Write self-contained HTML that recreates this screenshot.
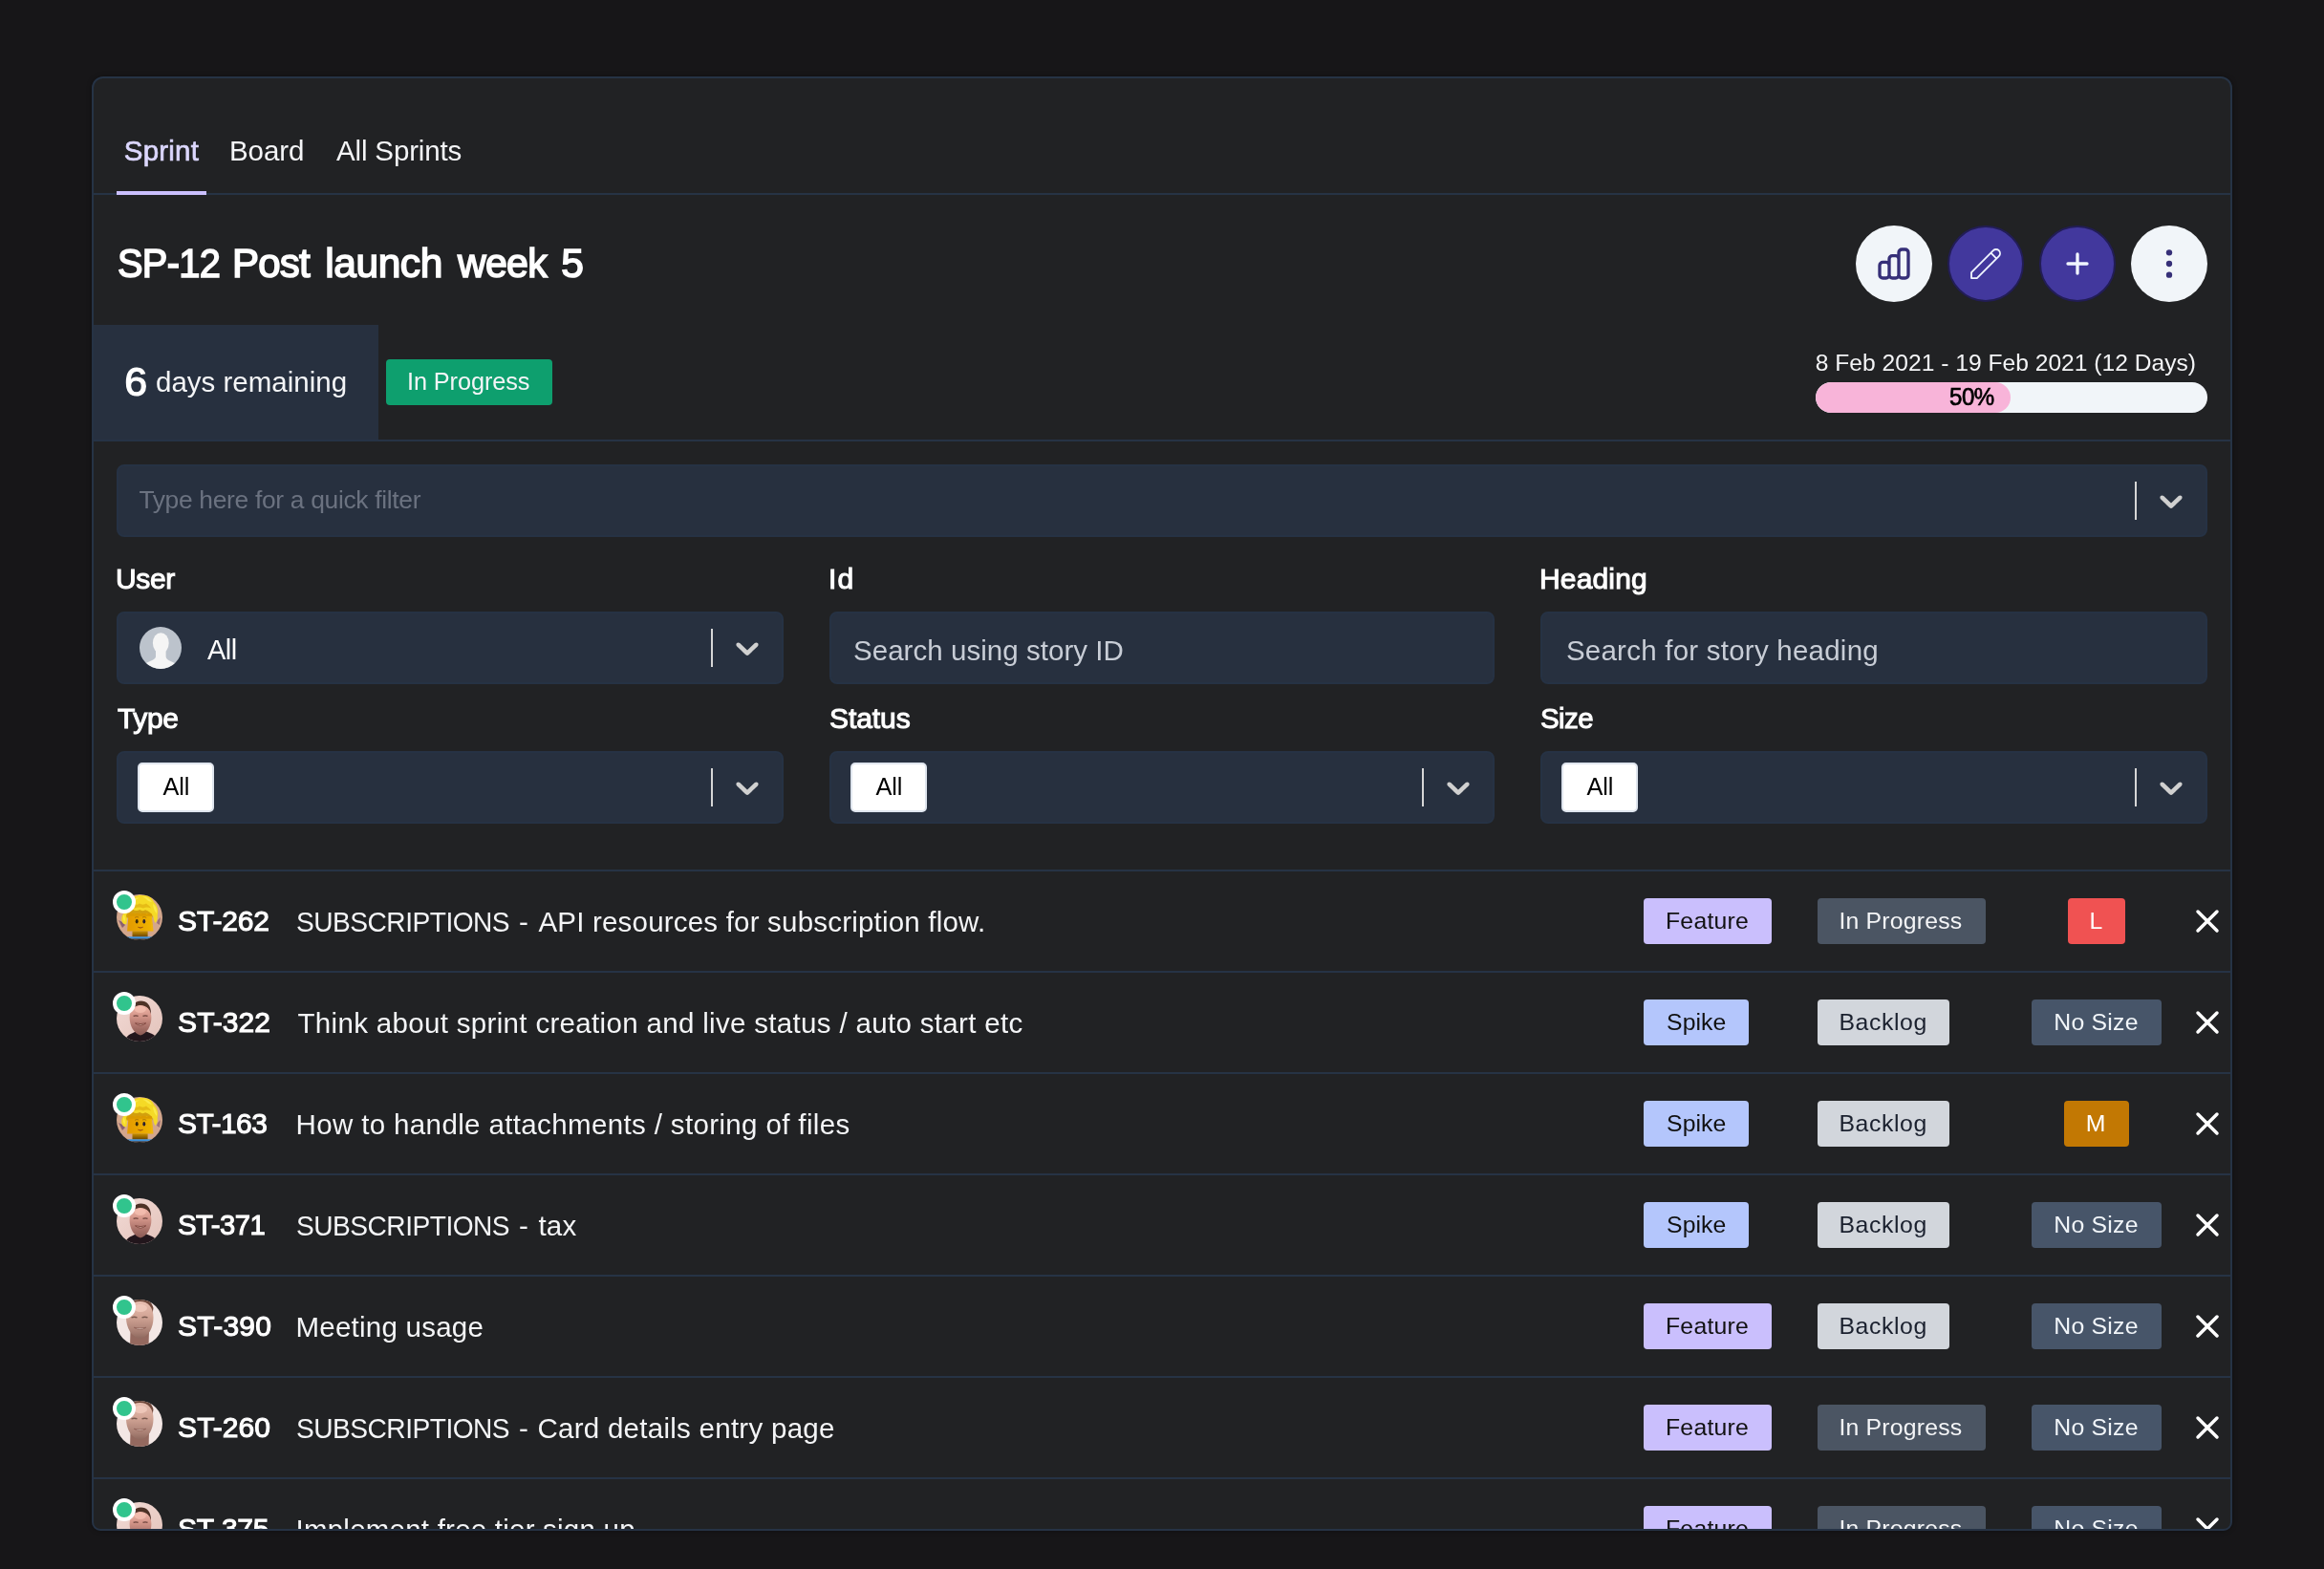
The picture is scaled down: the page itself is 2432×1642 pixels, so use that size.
<!DOCTYPE html>
<html lang="en"><head><meta charset="utf-8"><title>SP-12 Post launch week 5</title>
<style>
*{box-sizing:border-box;margin:0;padding:0}
h1{font:inherit}
html,body{width:2432px;height:1642px;overflow:hidden;background:#171618;font-family:"Liberation Sans",sans-serif;color:#fff}
.panel{position:absolute;left:96px;top:80px;width:2240px;height:1522px;border:2px solid #263345;border-radius:12px 12px 9px 9px;background:#212224;overflow:hidden;box-shadow:0 0 5px rgba(0,0,0,.35)}
.o{position:absolute;left:-98px;top:-82px;width:2432px;height:1642px;will-change:transform}
.o *{position:absolute}
.t{white-space:nowrap;line-height:1}
.hr{left:98px;width:2236px;height:2px;background:#263345}
.inp{background:#27303f;border:2px solid #263244;border-radius:8px;height:76px}
.sep{width:2px;height:40px;background:#d6d6d6}
.chip{width:80px;height:52px;background:#fff;border:2px solid #dfe5ee;border-radius:5px}
.bdg{height:48px;border-radius:4px}
.btn{width:80px;height:80px;border-radius:50%}
.btn svg{left:20px;top:20px;width:40px;height:40px}
.btn.p svg{left:18px;top:18px}
.av{width:48px;height:48px;border-radius:50%;overflow:hidden}
.dot{width:24px;height:24px;border-radius:50%;background:#31c48d;border:4px solid #fff}
svg{overflow:visible}
</style></head>
<body>
<div class="panel"><div class="o">
<nav class="tabs">
<span class="t" style="left:129.85px;top:143.00px;font-size:29.5px;-webkit-text-stroke:0.7px #dcd7fe;letter-spacing:0.187px;color:#dcd7fe;">Sprint</span>
<span class="t" style="left:240.00px;top:143.00px;font-size:29.5px;letter-spacing:-0.078px;color:#f4f5f7;">Board</span>
<span class="t" style="left:352.00px;top:143.00px;font-size:29.5px;letter-spacing:-0.154px;color:#f4f5f7;">All Sprints</span>
<div class="hr" style="top:202px"></div>
<div style="left:122px;top:200px;width:94px;height:4px;background:#cabffd"></div>
</nav>
<header>
<h1>
<span class="t" style="left:122.81px;top:255.40px;font-size:42.5px;-webkit-text-stroke:1.6px #fff;letter-spacing:-0.765px;transform:scaleX(0.9366);transform-origin:0 0;color:#fff;">SP-12</span>
<span class="t" style="left:243.43px;top:255.40px;font-size:42.5px;-webkit-text-stroke:1.6px #fff;letter-spacing:-0.765px;transform:scaleX(0.9873);transform-origin:0 0;color:#fff;">Post</span>
<span class="t" style="left:340.20px;top:255.40px;font-size:42.5px;-webkit-text-stroke:1.6px #fff;letter-spacing:-0.420px;color:#fff;">launch</span>
<span class="t" style="left:479.24px;top:255.40px;font-size:42.5px;-webkit-text-stroke:1.6px #fff;letter-spacing:-0.765px;transform:scaleX(0.9674);transform-origin:0 0;color:#fff;">week</span>
<span class="t" style="left:587.30px;top:255.40px;font-size:42.5px;-webkit-text-stroke:1.6px #fff;letter-spacing:-0.600px;color:#fff;">5</span>
</h1>
<div class="btn" style="left:1942px;top:236px;background:#f1f5f9"><svg viewBox="0 0 24 24" fill="none" stroke="#362f78" stroke-width="2" stroke-linecap="round" stroke-linejoin="round"><path d="M9 19v-6a2 2 0 00-2-2H5a2 2 0 00-2 2v6a2 2 0 002 2h2a2 2 0 002-2zm0 0V9a2 2 0 012-2h2a2 2 0 012 2v10m-6 0a2 2 0 002 2h2a2 2 0 002-2m0 0V5a2 2 0 012-2h2a2 2 0 012 2v14a2 2 0 01-2 2h-2a2 2 0 01-2-2z"/></svg></div>
<div class="btn p" style="left:2038px;top:236px;background:#42389d;border:2px solid #221d56"><svg viewBox="0 0 24 24" fill="none" stroke="#f0f5ff" stroke-width="1.1" stroke-linecap="round" stroke-linejoin="round"><path d="M15.232 5.232l3.536 3.536m-2.036-5.036a2.5 2.5 0 113.536 3.536L6.5 21.036H3v-3.572L16.732 3.732z"/></svg></div>
<div class="btn p" style="left:2134px;top:236px;background:#42389d;border:2px solid #221d56"><svg viewBox="0 0 24 24" fill="none" stroke="#f0f5ff" stroke-width="2" stroke-linecap="round" stroke-linejoin="round"><path d="M12 6v6m0 0v6m0-6h6m-6 0H6"/></svg></div>
<div class="btn" style="left:2230px;top:236px;background:#f1f5f9"><svg viewBox="0 0 24 24" fill="#362f78"><circle cx="12" cy="5" r="1.9"/><circle cx="12" cy="12" r="1.9"/><circle cx="12" cy="19" r="1.9"/></svg></div>
<div style="left:96px;top:340px;width:300px;height:120px;background:#27303f"></div>
<span class="t" style="left:130.30px;top:377.90px;font-size:43px;-webkit-text-stroke:1.2px #fff;letter-spacing:-0.200px;color:#fff;">6</span>
<span class="t" style="left:163.00px;top:384.70px;font-size:29.5px;color:#f4f5f7;">days remaining</span>
<div class="bdg" style="left:404px;top:376px;width:174px;background:#0e9f6e"></div>
<span class="t" style="left:426.00px;top:386.50px;font-size:25.3px;letter-spacing:-0.095px;color:#f4f5f7;">In Progress</span>
<span class="t" style="left:1899.80px;top:368.00px;font-size:24.6px;letter-spacing:0.011px;color:#f4f5f7;">8 Feb 2021 - 19 Feb 2021 (12 Days)</span>
<div style="left:1900px;top:400px;width:410px;height:32px;border-radius:16px;background:#f1f5f9;overflow:hidden"><div style="left:0;top:0;width:204px;height:32px;border-radius:16px;background:#f8b4d9"></div></div>
<span class="t" style="left:2040.08px;top:403.00px;font-size:25px;-webkit-text-stroke:0.7px #000;letter-spacing:-0.450px;transform:scaleX(0.9608);transform-origin:0 0;color:#000;">50%</span>
<div class="hr" style="top:460px"></div>
</header>
<section class="filters">
<div class="inp" style="left:122px;top:486px;width:2188px"></div>
<span class="t" style="left:145.40px;top:510.20px;font-size:26.4px;letter-spacing:-0.316px;color:#6b7280;">Type here for a quick filter</span>
<div class="sep" style="left:2234px;top:504px"></div>
<svg class="chev" viewBox="0 0 20 20" style="left:2252px;top:503.8px;width:40px;height:40px" fill="#d0d0d0"><path d="M4.516 7.548c0.436-0.446 1.043-0.481 1.576 0l3.908 3.747 3.908-3.747c0.533-0.481 1.141-0.446 1.574 0 0.436 0.445 0.408 1.197 0 1.615-0.406 0.418-4.695 4.502-4.695 4.502-0.217 0.223-0.502 0.335-0.787 0.335s-0.57-0.112-0.789-0.335c0 0-4.287-4.084-4.695-4.502s-0.436-1.17 0-1.615z"/></svg>
<span class="t" style="left:121.03px;top:591.00px;font-size:30px;-webkit-text-stroke:1.05px #fff;letter-spacing:-0.333px;color:#fff;">User</span>
<div class="inp" style="left:122px;top:640px;width:698px"></div>
<span class="t" style="left:867.02px;top:591.00px;font-size:30px;-webkit-text-stroke:1.05px #fff;letter-spacing:1.115px;color:#fff;">Id</span>
<div class="inp" style="left:868px;top:640px;width:696px"></div>
<span class="t" style="left:1611.03px;top:591.00px;font-size:30px;-webkit-text-stroke:1.05px #fff;letter-spacing:0.147px;color:#fff;">Heading</span>
<div class="inp" style="left:1612px;top:640px;width:698px"></div>
<svg viewBox="0 0 44 44" style="left:146px;top:656px;width:44px;height:44px"><defs><clipPath id="uc"><circle cx="22" cy="22" r="22"/></clipPath></defs><circle cx="22" cy="22" r="22" fill="#bcc3cc"/><g clip-path="url(#uc)" fill="#f5f5f5"><ellipse cx="22.3" cy="17" rx="8.4" ry="10.8"/><path d="M17 24h10.600v7c0 2.300 1.800 3.600 5 5 3 1.300 5.600 2.400 7 4.400v8H4v-8c1.400-2 4-3.100 7-4.400 3.200-1.400 6-2.700 6-5z"/></g></svg>
<span class="t" style="left:216.70px;top:665.00px;font-size:29.5px;letter-spacing:-0.531px;transform:scaleX(0.9845);transform-origin:0 0;color:#fff;">All</span>
<div class="sep" style="left:744px;top:658px"></div>
<svg class="chev" viewBox="0 0 20 20" style="left:762px;top:657.8px;width:40px;height:40px" fill="#d0d0d0"><path d="M4.516 7.548c0.436-0.446 1.043-0.481 1.576 0l3.908 3.747 3.908-3.747c0.533-0.481 1.141-0.446 1.574 0 0.436 0.445 0.408 1.197 0 1.615-0.406 0.418-4.695 4.502-4.695 4.502-0.217 0.223-0.502 0.335-0.787 0.335s-0.57-0.112-0.789-0.335c0 0-4.287-4.084-4.695-4.502s-0.436-1.17 0-1.615z"/></svg>
<span class="t" style="left:893.00px;top:665.50px;font-size:29.5px;letter-spacing:0.040px;color:#c8cdd6;">Search using story ID</span>
<span class="t" style="left:1638.90px;top:665.50px;font-size:29.5px;letter-spacing:0.235px;color:#c8cdd6;">Search for story heading</span>
<span class="t" style="left:123.03px;top:737.00px;font-size:30px;-webkit-text-stroke:1.05px #fff;letter-spacing:-0.335px;color:#fff;">Type</span>
<div class="inp" style="left:122px;top:786px;width:698px"></div>
<div class="chip" style="left:144px;top:798px"></div>
<span class="t" style="left:170.50px;top:811.00px;font-size:25.3px;letter-spacing:-0.146px;color:#000;">All</span>
<div class="sep" style="left:744px;top:804px"></div>
<svg class="chev" viewBox="0 0 20 20" style="left:762px;top:803.8px;width:40px;height:40px" fill="#d0d0d0"><path d="M4.516 7.548c0.436-0.446 1.043-0.481 1.576 0l3.908 3.747 3.908-3.747c0.533-0.481 1.141-0.446 1.574 0 0.436 0.445 0.408 1.197 0 1.615-0.406 0.418-4.695 4.502-4.695 4.502-0.217 0.223-0.502 0.335-0.787 0.335s-0.57-0.112-0.789-0.335c0 0-4.287-4.084-4.695-4.502s-0.436-1.17 0-1.615z"/></svg>
<span class="t" style="left:868.02px;top:737.00px;font-size:30px;-webkit-text-stroke:1.05px #fff;letter-spacing:-0.080px;color:#fff;">Status</span>
<div class="inp" style="left:868px;top:786px;width:696px"></div>
<div class="chip" style="left:890px;top:798px"></div>
<span class="t" style="left:916.50px;top:811.00px;font-size:25.3px;letter-spacing:-0.146px;color:#000;">All</span>
<div class="sep" style="left:1488px;top:804px"></div>
<svg class="chev" viewBox="0 0 20 20" style="left:1506px;top:803.8px;width:40px;height:40px" fill="#d0d0d0"><path d="M4.516 7.548c0.436-0.446 1.043-0.481 1.576 0l3.908 3.747 3.908-3.747c0.533-0.481 1.141-0.446 1.574 0 0.436 0.445 0.408 1.197 0 1.615-0.406 0.418-4.695 4.502-4.695 4.502-0.217 0.223-0.502 0.335-0.787 0.335s-0.57-0.112-0.789-0.335c0 0-4.287-4.084-4.695-4.502s-0.436-1.17 0-1.615z"/></svg>
<span class="t" style="left:1612.03px;top:737.00px;font-size:30px;-webkit-text-stroke:1.05px #fff;letter-spacing:-0.540px;transform:scaleX(0.9803);transform-origin:0 0;color:#fff;">Size</span>
<div class="inp" style="left:1612px;top:786px;width:698px"></div>
<div class="chip" style="left:1634px;top:798px"></div>
<span class="t" style="left:1660.50px;top:811.00px;font-size:25.3px;letter-spacing:-0.146px;color:#000;">All</span>
<div class="sep" style="left:2234px;top:804px"></div>
<svg class="chev" viewBox="0 0 20 20" style="left:2252px;top:803.8px;width:40px;height:40px" fill="#d0d0d0"><path d="M4.516 7.548c0.436-0.446 1.043-0.481 1.576 0l3.908 3.747 3.908-3.747c0.533-0.481 1.141-0.446 1.574 0 0.436 0.445 0.408 1.197 0 1.615-0.406 0.418-4.695 4.502-4.695 4.502-0.217 0.223-0.502 0.335-0.787 0.335s-0.57-0.112-0.789-0.335c0 0-4.287-4.084-4.695-4.502s-0.436-1.17 0-1.615z"/></svg>
</section>
<main class="stories">
<article>
<div class="hr" style="top:910px"></div>
<svg class="av" viewBox="0 0 48 48" style="left:122px;top:936px"><defs><filter id="lb0" x="-10%" y="-10%" width="120%" height="120%"><feGaussianBlur stdDeviation=".55"/></filter><linearGradient id="ln0" x1="0" y1="0" x2="0" y2="1"><stop offset="0" stop-color="#c99000"/><stop offset="1" stop-color="#6b4500"/></linearGradient><linearGradient id="lf0" x1="0" y1="0" x2="1" y2="0"><stop offset="0" stop-color="#e39a00"/><stop offset=".55" stop-color="#eaa800"/><stop offset="1" stop-color="#f0b608"/></linearGradient></defs><rect width="48" height="48" fill="#d3a68c"/><g filter="url(#lb0)"><path d="M2 27q4 1 7 5l-3 3z" fill="#8a6070"/><path d="M46 24q-3 2-4 6l3 2z" fill="#9a7078"/><path d="M6.500 30C4.500 27 5 22.500 7.500 20 6 15 8.500 9.500 13.500 7.500 16.500 2.500 22.500 0 27.500 1 33 .300 37.500 3.500 39.300 8.500 42.800 11.500 44 17.500 42.700 22 43.300 26 42 29 40.300 29.800 39 27.500 38.500 25 38.300 22.500L11.500 22.500C11.300 26 10.800 29 10.200 31.200 8.800 31.500 7.500 31 6.500 30z" fill="#f5da26"/><path d="M10 22c1-3 3.500-5.300 7-6.200 2.200 1.600 4.600 1.700 7.300 .300 1.700 1.500 3.700 1.400 5.700 .200 3.800 1 6.500 3.300 7.800 6.700l-.500 1.500H10.500z" fill="#d2a010"/><path d="M14 8c2-3 6-5 10-4.500-3 1-5 3-6 6-1.500-.500-3-.800-4-1.500zM27 2.500c4-.500 8 1.500 10 5.500-3-.500-5-1.500-7-4zM38 10c3 2 4.500 6 4 10-2-2-3.500-5-4-10zM7.500 21c-1 3-.500 6 1 8 .500-3 .500-5-1-8z" fill="#fbea4c"/><path d="M18 10c2 1 4 1 6-.500 2 1.500 5 1.500 7 0 2 1.500 4 3 5 5-3-1.500-6-1.500-8 0-3-1.500-6-1.500-9 0-1.500-1.500-1.500-3-1-4.500z" fill="#e6bc18"/><path d="M12.600 20h24l1.900 18.600H11.100z" fill="url(#lf0)"/><path d="M12 20.500c2.500-2 5-1.500 7 .200 2-1.900 4.500-1.700 6 .100 2-1.800 4.500-1.600 6.500 0 2-1.400 4-1.300 5.500-.300l.300 2.200H12z" fill="#d99a06"/><path d="M16.500 38.400h16.100V44.400H16.500z" fill="url(#ln0)"/><path d="M11 44.300h26.500v2.300H11z" fill="#3b90da"/><path d="M0 46.500h48V48H0z" fill="#212224"/></g><ellipse cx="21.200" cy="28.300" rx="1.450" ry="2.250" fill="#3a2a0a"/><ellipse cx="28.800" cy="28.300" rx="1.450" ry="2.250" fill="#2a2030"/><path d="M22.300 34.200q2.600 1.900 5.400 0" stroke="#9a5410" stroke-width=".9" fill="#b8640e"/><path d="M19 24.400q2-1.600 4.200-.300M27 24.100q2.200-1.300 4.200.300" stroke="#b07a08" stroke-width="1" fill="none"/></svg>
<div class="dot" style="left:118px;top:932px"></div>
<span class="t" style="left:186.12px;top:949.00px;font-size:30px;-webkit-text-stroke:1.05px #fff;letter-spacing:-0.178px;color:#fff;">ST-262</span>
<span class="t" style="left:310.05px;top:949.50px;font-size:29.5px;letter-spacing:-0.531px;transform:scaleX(0.9532);transform-origin:0 0;color:#f4f5f7;">SUBSCRIPTIONS</span>
<span class="t" style="left:543.00px;top:949.50px;font-size:29.5px;letter-spacing:1.000px;color:#f4f5f7;">-</span>
<span class="t" style="left:563.40px;top:949.50px;font-size:29.5px;letter-spacing:0.202px;color:#f4f5f7;">API resources for subscription flow.</span>
<div class="bdg" style="left:1720px;top:940px;width:134px;background:#cabffd"></div>
<span class="t" style="left:1743.00px;top:952.00px;font-size:24.8px;letter-spacing:0.222px;color:#111;">Feature</span>
<div class="bdg" style="left:1902px;top:940px;width:176px;background:#4b5563"></div>
<span class="t" style="left:1924.40px;top:952.00px;font-size:24.8px;letter-spacing:0.200px;color:#f4f5f7;">In Progress</span>
<div class="bdg" style="left:2164.0px;top:940px;width:60px;background:#f05252"></div>
<span class="t" style="left:2186.50px;top:952.00px;font-size:24.8px;color:#fff;">L</span>
<svg viewBox="0 0 24 24" style="left:2290px;top:944px;width:40px;height:40px" fill="none" stroke="#fff" stroke-width="2.100" stroke-linecap="round"><path d="M6 18L18 6M6 6l12 12"/></svg>
</article>
<article>
<div class="hr" style="top:1016px"></div>
<svg class="av" viewBox="0 0 48 48" style="left:122px;top:1042px"><defs><filter id="ab1" x="-10%" y="-10%" width="120%" height="120%"><feGaussianBlur stdDeviation=".7"/></filter><linearGradient id="ag1" x1="0" y1="0" x2="0" y2="1"><stop offset="0" stop-color="#f1b8aa"/><stop offset=".35" stop-color="#d4968a"/><stop offset=".75" stop-color="#a56e66"/><stop offset="1" stop-color="#8a5a54"/></linearGradient><linearGradient id="abg1" x1="0" y1="0" x2="1" y2="1"><stop offset="0" stop-color="#f2dad5"/><stop offset="1" stop-color="#e3c3bb"/></linearGradient></defs><rect width="48" height="48" fill="url(#abg1)"/><g filter="url(#ab1)"><path d="M8 50c.500-5 3-8.500 8-10.500l5-2.500h9l6 2.500c4.500 1.500 6.500 5 7 10.500z" fill="#23141a"/><path d="M14.500 18c0-7 4.500-12.500 11-12.500 6 0 10.500 4.500 10.500 12.500l-1.500 3-2-8-8.500-2.500-7 3z" fill="#4d3028"/><path d="M13.600 23c0-8 5-13 11.400-13s11.400 5 11.400 13c0 8-4.500 17-11.400 18.500C18 40 13.600 31 13.600 23z" fill="url(#ag1)"/><path d="M19.500 28.800q5.500 4.600 11.200 0q-5.600 1.600-11.200 0z" fill="#f3d8cc" stroke="#7a4038" stroke-width=".9"/><path d="M17.600 21.300q2.500-1 5 0M27.500 21.300q2.500-1 5 0" stroke="#70453e" stroke-width="1.300" fill="none"/><ellipse cx="24.800" cy="14.500" rx="6" ry="3.500" fill="#f6c2b4" opacity=".7"/></g></svg>
<div class="dot" style="left:118px;top:1038px"></div>
<span class="t" style="left:186.12px;top:1055.00px;font-size:30px;-webkit-text-stroke:1.05px #fff;letter-spacing:0.022px;color:#fff;">ST-322</span>
<span class="t" style="left:311.50px;top:1055.50px;font-size:29.5px;letter-spacing:0.326px;color:#f4f5f7;">Think about sprint creation and live status / auto start etc</span>
<div class="bdg" style="left:1720px;top:1046px;width:110px;background:#b4c6fc"></div>
<span class="t" style="left:1744.00px;top:1058.00px;font-size:24.8px;letter-spacing:0.091px;color:#111;">Spike</span>
<div class="bdg" style="left:1902px;top:1046px;width:138px;background:#d2d6dc"></div>
<span class="t" style="left:1924.40px;top:1058.00px;font-size:24.8px;letter-spacing:0.596px;color:#1a202e;">Backlog</span>
<div class="bdg" style="left:2126.0px;top:1046px;width:136px;background:#475569"></div>
<span class="t" style="left:2149.30px;top:1058.00px;font-size:24.8px;letter-spacing:0.228px;color:#f1f5f9;">No Size</span>
<svg viewBox="0 0 24 24" style="left:2290px;top:1050px;width:40px;height:40px" fill="none" stroke="#fff" stroke-width="2.100" stroke-linecap="round"><path d="M6 18L18 6M6 6l12 12"/></svg>
</article>
<article>
<div class="hr" style="top:1122px"></div>
<svg class="av" viewBox="0 0 48 48" style="left:122px;top:1148px"><defs><filter id="lb2" x="-10%" y="-10%" width="120%" height="120%"><feGaussianBlur stdDeviation=".55"/></filter><linearGradient id="ln2" x1="0" y1="0" x2="0" y2="1"><stop offset="0" stop-color="#c99000"/><stop offset="1" stop-color="#6b4500"/></linearGradient><linearGradient id="lf2" x1="0" y1="0" x2="1" y2="0"><stop offset="0" stop-color="#e39a00"/><stop offset=".55" stop-color="#eaa800"/><stop offset="1" stop-color="#f0b608"/></linearGradient></defs><rect width="48" height="48" fill="#d3a68c"/><g filter="url(#lb2)"><path d="M2 27q4 1 7 5l-3 3z" fill="#8a6070"/><path d="M46 24q-3 2-4 6l3 2z" fill="#9a7078"/><path d="M6.500 30C4.500 27 5 22.500 7.500 20 6 15 8.500 9.500 13.500 7.500 16.500 2.500 22.500 0 27.500 1 33 .300 37.500 3.500 39.300 8.500 42.800 11.500 44 17.500 42.700 22 43.300 26 42 29 40.300 29.800 39 27.500 38.500 25 38.300 22.500L11.500 22.500C11.300 26 10.800 29 10.200 31.200 8.800 31.500 7.500 31 6.500 30z" fill="#f5da26"/><path d="M10 22c1-3 3.500-5.300 7-6.200 2.200 1.600 4.600 1.700 7.300 .300 1.700 1.500 3.700 1.400 5.700 .200 3.800 1 6.500 3.300 7.800 6.700l-.500 1.500H10.500z" fill="#d2a010"/><path d="M14 8c2-3 6-5 10-4.500-3 1-5 3-6 6-1.500-.500-3-.800-4-1.500zM27 2.500c4-.500 8 1.500 10 5.500-3-.500-5-1.500-7-4zM38 10c3 2 4.500 6 4 10-2-2-3.500-5-4-10zM7.500 21c-1 3-.500 6 1 8 .500-3 .500-5-1-8z" fill="#fbea4c"/><path d="M18 10c2 1 4 1 6-.500 2 1.500 5 1.500 7 0 2 1.500 4 3 5 5-3-1.500-6-1.500-8 0-3-1.500-6-1.500-9 0-1.500-1.500-1.500-3-1-4.500z" fill="#e6bc18"/><path d="M12.600 20h24l1.900 18.600H11.100z" fill="url(#lf2)"/><path d="M12 20.500c2.500-2 5-1.500 7 .200 2-1.900 4.500-1.700 6 .100 2-1.800 4.500-1.600 6.500 0 2-1.400 4-1.300 5.500-.300l.300 2.200H12z" fill="#d99a06"/><path d="M16.500 38.400h16.100V44.400H16.500z" fill="url(#ln2)"/><path d="M11 44.300h26.500v2.300H11z" fill="#3b90da"/><path d="M0 46.500h48V48H0z" fill="#212224"/></g><ellipse cx="21.200" cy="28.300" rx="1.450" ry="2.250" fill="#3a2a0a"/><ellipse cx="28.800" cy="28.300" rx="1.450" ry="2.250" fill="#2a2030"/><path d="M22.300 34.200q2.600 1.900 5.400 0" stroke="#9a5410" stroke-width=".9" fill="#b8640e"/><path d="M19 24.400q2-1.600 4.200-.300M27 24.100q2.200-1.300 4.200.300" stroke="#b07a08" stroke-width="1" fill="none"/></svg>
<div class="dot" style="left:118px;top:1144px"></div>
<span class="t" style="left:186.13px;top:1161.00px;font-size:30px;-webkit-text-stroke:1.05px #fff;letter-spacing:-0.540px;transform:scaleX(0.9980);transform-origin:0 0;color:#fff;">ST-163</span>
<span class="t" style="left:309.50px;top:1161.50px;font-size:29.5px;letter-spacing:0.365px;color:#f4f5f7;">How to handle attachments / storing of files</span>
<div class="bdg" style="left:1720px;top:1152px;width:110px;background:#b4c6fc"></div>
<span class="t" style="left:1744.00px;top:1164.00px;font-size:24.8px;letter-spacing:0.091px;color:#111;">Spike</span>
<div class="bdg" style="left:1902px;top:1152px;width:138px;background:#d2d6dc"></div>
<span class="t" style="left:1924.40px;top:1164.00px;font-size:24.8px;letter-spacing:0.596px;color:#1a202e;">Backlog</span>
<div class="bdg" style="left:2160.0px;top:1152px;width:68px;background:#c27803"></div>
<span class="t" style="left:2182.65px;top:1164.00px;font-size:24.8px;letter-spacing:1.700px;color:#fff;">M</span>
<svg viewBox="0 0 24 24" style="left:2290px;top:1156px;width:40px;height:40px" fill="none" stroke="#fff" stroke-width="2.100" stroke-linecap="round"><path d="M6 18L18 6M6 6l12 12"/></svg>
</article>
<article>
<div class="hr" style="top:1228px"></div>
<svg class="av" viewBox="0 0 48 48" style="left:122px;top:1254px"><defs><filter id="ab3" x="-10%" y="-10%" width="120%" height="120%"><feGaussianBlur stdDeviation=".7"/></filter><linearGradient id="ag3" x1="0" y1="0" x2="0" y2="1"><stop offset="0" stop-color="#f1b8aa"/><stop offset=".35" stop-color="#d4968a"/><stop offset=".75" stop-color="#a56e66"/><stop offset="1" stop-color="#8a5a54"/></linearGradient><linearGradient id="abg3" x1="0" y1="0" x2="1" y2="1"><stop offset="0" stop-color="#f2dad5"/><stop offset="1" stop-color="#e3c3bb"/></linearGradient></defs><rect width="48" height="48" fill="url(#abg3)"/><g filter="url(#ab3)"><path d="M8 50c.500-5 3-8.500 8-10.500l5-2.500h9l6 2.500c4.500 1.500 6.500 5 7 10.500z" fill="#23141a"/><path d="M14.500 18c0-7 4.500-12.500 11-12.500 6 0 10.500 4.500 10.500 12.500l-1.500 3-2-8-8.500-2.500-7 3z" fill="#4d3028"/><path d="M13.600 23c0-8 5-13 11.400-13s11.400 5 11.400 13c0 8-4.500 17-11.400 18.500C18 40 13.600 31 13.600 23z" fill="url(#ag3)"/><path d="M19.500 28.800q5.500 4.600 11.200 0q-5.600 1.600-11.200 0z" fill="#f3d8cc" stroke="#7a4038" stroke-width=".9"/><path d="M17.600 21.300q2.500-1 5 0M27.500 21.300q2.500-1 5 0" stroke="#70453e" stroke-width="1.300" fill="none"/><ellipse cx="24.800" cy="14.500" rx="6" ry="3.500" fill="#f6c2b4" opacity=".7"/></g></svg>
<div class="dot" style="left:118px;top:1250px"></div>
<span class="t" style="left:186.14px;top:1267.00px;font-size:30px;-webkit-text-stroke:1.05px #fff;letter-spacing:-0.540px;transform:scaleX(0.9755);transform-origin:0 0;color:#fff;">ST-371</span>
<span class="t" style="left:310.05px;top:1267.50px;font-size:29.5px;letter-spacing:-0.531px;transform:scaleX(0.9532);transform-origin:0 0;color:#f4f5f7;">SUBSCRIPTIONS</span>
<span class="t" style="left:543.00px;top:1267.50px;font-size:29.5px;letter-spacing:1.000px;color:#f4f5f7;">-</span>
<span class="t" style="left:563.40px;top:1267.50px;font-size:29.5px;letter-spacing:0.249px;color:#f4f5f7;">tax</span>
<div class="bdg" style="left:1720px;top:1258px;width:110px;background:#b4c6fc"></div>
<span class="t" style="left:1744.00px;top:1270.00px;font-size:24.8px;letter-spacing:0.091px;color:#111;">Spike</span>
<div class="bdg" style="left:1902px;top:1258px;width:138px;background:#d2d6dc"></div>
<span class="t" style="left:1924.40px;top:1270.00px;font-size:24.8px;letter-spacing:0.596px;color:#1a202e;">Backlog</span>
<div class="bdg" style="left:2126.0px;top:1258px;width:136px;background:#475569"></div>
<span class="t" style="left:2149.30px;top:1270.00px;font-size:24.8px;letter-spacing:0.228px;color:#f1f5f9;">No Size</span>
<svg viewBox="0 0 24 24" style="left:2290px;top:1262px;width:40px;height:40px" fill="none" stroke="#fff" stroke-width="2.100" stroke-linecap="round"><path d="M6 18L18 6M6 6l12 12"/></svg>
</article>
<article>
<div class="hr" style="top:1334px"></div>
<svg class="av" viewBox="0 0 48 48" style="left:122px;top:1360px"><defs><filter id="cb4" x="-10%" y="-10%" width="120%" height="120%"><feGaussianBlur stdDeviation=".7"/></filter><linearGradient id="cg4" x1="0" y1="0" x2="0" y2="1"><stop offset="0" stop-color="#e9c0b2"/><stop offset=".4" stop-color="#d3a596"/><stop offset=".8" stop-color="#a98074"/><stop offset="1" stop-color="#8d685e"/></linearGradient></defs><rect width="48" height="48" fill="#f3e7e5"/><g filter="url(#cb4)"><path d="M12 9C14 2 20-1 26-1c7 0 11 4 12.500 10l-1 6-4-9-9-3-9 3z" fill="#70483a"/><path d="M14.500 32h19.500l-.500 18H14z" fill="#94695f"/><path d="M10 19C10 8 16 2 24.500 2S38.500 8 38.500 19c0 10-5 20.500-14 22C15.500 39.500 10 29 10 19z" fill="url(#cg4)"/><path d="M18.300 29.300q6.300 4 12.400 0q-6.200 1.500-12.400 0z" fill="#f4e2da" stroke="#8a5a50" stroke-width=".8"/><path d="M15.500 18.800q3-1.200 6 0M26.500 18.800q3-1.200 6 0" stroke="#7a5a50" stroke-width="1.400" fill="none"/><ellipse cx="25" cy="9" rx="7" ry="4" fill="#f3cdc0" opacity=".75"/></g></svg>
<div class="dot" style="left:118px;top:1356px"></div>
<span class="t" style="left:186.12px;top:1373.00px;font-size:30px;-webkit-text-stroke:1.05px #fff;letter-spacing:0.222px;color:#fff;">ST-390</span>
<span class="t" style="left:309.50px;top:1373.50px;font-size:29.5px;letter-spacing:0.240px;color:#f4f5f7;">Meeting usage</span>
<div class="bdg" style="left:1720px;top:1364px;width:134px;background:#cabffd"></div>
<span class="t" style="left:1743.00px;top:1376.00px;font-size:24.8px;letter-spacing:0.222px;color:#111;">Feature</span>
<div class="bdg" style="left:1902px;top:1364px;width:138px;background:#d2d6dc"></div>
<span class="t" style="left:1924.40px;top:1376.00px;font-size:24.8px;letter-spacing:0.596px;color:#1a202e;">Backlog</span>
<div class="bdg" style="left:2126.0px;top:1364px;width:136px;background:#475569"></div>
<span class="t" style="left:2149.30px;top:1376.00px;font-size:24.8px;letter-spacing:0.228px;color:#f1f5f9;">No Size</span>
<svg viewBox="0 0 24 24" style="left:2290px;top:1368px;width:40px;height:40px" fill="none" stroke="#fff" stroke-width="2.100" stroke-linecap="round"><path d="M6 18L18 6M6 6l12 12"/></svg>
</article>
<article>
<div class="hr" style="top:1440px"></div>
<svg class="av" viewBox="0 0 48 48" style="left:122px;top:1466px"><defs><filter id="cb5" x="-10%" y="-10%" width="120%" height="120%"><feGaussianBlur stdDeviation=".7"/></filter><linearGradient id="cg5" x1="0" y1="0" x2="0" y2="1"><stop offset="0" stop-color="#e9c0b2"/><stop offset=".4" stop-color="#d3a596"/><stop offset=".8" stop-color="#a98074"/><stop offset="1" stop-color="#8d685e"/></linearGradient></defs><rect width="48" height="48" fill="#f3e7e5"/><g filter="url(#cb5)"><path d="M12 9C14 2 20-1 26-1c7 0 11 4 12.500 10l-1 6-4-9-9-3-9 3z" fill="#70483a"/><path d="M14.500 32h19.500l-.500 18H14z" fill="#94695f"/><path d="M10 19C10 8 16 2 24.500 2S38.500 8 38.500 19c0 10-5 20.500-14 22C15.500 39.500 10 29 10 19z" fill="url(#cg5)"/><path d="M18.300 29.300q6.300 4 12.400 0q-6.200 1.500-12.400 0z" fill="#f4e2da" stroke="#8a5a50" stroke-width=".8"/><path d="M15.500 18.800q3-1.200 6 0M26.500 18.800q3-1.200 6 0" stroke="#7a5a50" stroke-width="1.400" fill="none"/><ellipse cx="25" cy="9" rx="7" ry="4" fill="#f3cdc0" opacity=".75"/></g></svg>
<div class="dot" style="left:118px;top:1462px"></div>
<span class="t" style="left:186.12px;top:1479.00px;font-size:30px;-webkit-text-stroke:1.05px #fff;letter-spacing:0.022px;color:#fff;">ST-260</span>
<span class="t" style="left:310.05px;top:1479.50px;font-size:29.5px;letter-spacing:-0.531px;transform:scaleX(0.9532);transform-origin:0 0;color:#f4f5f7;">SUBSCRIPTIONS</span>
<span class="t" style="left:543.00px;top:1479.50px;font-size:29.5px;letter-spacing:1.000px;color:#f4f5f7;">-</span>
<span class="t" style="left:562.40px;top:1479.50px;font-size:29.5px;letter-spacing:0.273px;color:#f4f5f7;">Card details entry page</span>
<div class="bdg" style="left:1720px;top:1470px;width:134px;background:#cabffd"></div>
<span class="t" style="left:1743.00px;top:1482.00px;font-size:24.8px;letter-spacing:0.222px;color:#111;">Feature</span>
<div class="bdg" style="left:1902px;top:1470px;width:176px;background:#4b5563"></div>
<span class="t" style="left:1924.40px;top:1482.00px;font-size:24.8px;letter-spacing:0.200px;color:#f4f5f7;">In Progress</span>
<div class="bdg" style="left:2126.0px;top:1470px;width:136px;background:#475569"></div>
<span class="t" style="left:2149.30px;top:1482.00px;font-size:24.8px;letter-spacing:0.228px;color:#f1f5f9;">No Size</span>
<svg viewBox="0 0 24 24" style="left:2290px;top:1474px;width:40px;height:40px" fill="none" stroke="#fff" stroke-width="2.100" stroke-linecap="round"><path d="M6 18L18 6M6 6l12 12"/></svg>
</article>
<article>
<div class="hr" style="top:1546px"></div>
<svg class="av" viewBox="0 0 48 48" style="left:122px;top:1572px"><defs><filter id="ab6" x="-10%" y="-10%" width="120%" height="120%"><feGaussianBlur stdDeviation=".7"/></filter><linearGradient id="ag6" x1="0" y1="0" x2="0" y2="1"><stop offset="0" stop-color="#f1b8aa"/><stop offset=".35" stop-color="#d4968a"/><stop offset=".75" stop-color="#a56e66"/><stop offset="1" stop-color="#8a5a54"/></linearGradient><linearGradient id="abg6" x1="0" y1="0" x2="1" y2="1"><stop offset="0" stop-color="#f2dad5"/><stop offset="1" stop-color="#e3c3bb"/></linearGradient></defs><rect width="48" height="48" fill="url(#abg6)"/><g filter="url(#ab6)"><path d="M8 50c.500-5 3-8.500 8-10.500l5-2.500h9l6 2.500c4.500 1.500 6.500 5 7 10.500z" fill="#23141a"/><path d="M14.500 18c0-7 4.500-12.500 11-12.500 6 0 10.500 4.500 10.500 12.500l-1.500 3-2-8-8.500-2.500-7 3z" fill="#4d3028"/><path d="M13.600 23c0-8 5-13 11.400-13s11.400 5 11.400 13c0 8-4.500 17-11.400 18.500C18 40 13.600 31 13.600 23z" fill="url(#ag6)"/><path d="M19.500 28.800q5.500 4.600 11.200 0q-5.600 1.600-11.200 0z" fill="#f3d8cc" stroke="#7a4038" stroke-width=".9"/><path d="M17.600 21.300q2.500-1 5 0M27.500 21.300q2.500-1 5 0" stroke="#70453e" stroke-width="1.300" fill="none"/><ellipse cx="24.800" cy="14.500" rx="6" ry="3.500" fill="#f6c2b4" opacity=".7"/></g></svg>
<div class="dot" style="left:118px;top:1568px"></div>
<span class="t" style="left:186.12px;top:1585.00px;font-size:30px;-webkit-text-stroke:1.05px #fff;letter-spacing:-0.278px;color:#fff;">ST-375</span>
<span class="t" style="left:309.50px;top:1585.50px;font-size:29.5px;letter-spacing:0.225px;color:#f4f5f7;">Implement free tier sign up</span>
<div class="bdg" style="left:1720px;top:1576px;width:134px;background:#cabffd"></div>
<span class="t" style="left:1743.00px;top:1588.00px;font-size:24.8px;letter-spacing:0.222px;color:#111;">Feature</span>
<div class="bdg" style="left:1902px;top:1576px;width:176px;background:#4b5563"></div>
<span class="t" style="left:1924.40px;top:1588.00px;font-size:24.8px;letter-spacing:0.200px;color:#f4f5f7;">In Progress</span>
<div class="bdg" style="left:2126.0px;top:1576px;width:136px;background:#475569"></div>
<span class="t" style="left:2149.30px;top:1588.00px;font-size:24.8px;letter-spacing:0.228px;color:#f1f5f9;">No Size</span>
<svg viewBox="0 0 24 24" style="left:2290px;top:1580px;width:40px;height:40px" fill="none" stroke="#fff" stroke-width="2.100" stroke-linecap="round"><path d="M6 18L18 6M6 6l12 12"/></svg>
</article>
</main>
</div></div>
</body></html>
